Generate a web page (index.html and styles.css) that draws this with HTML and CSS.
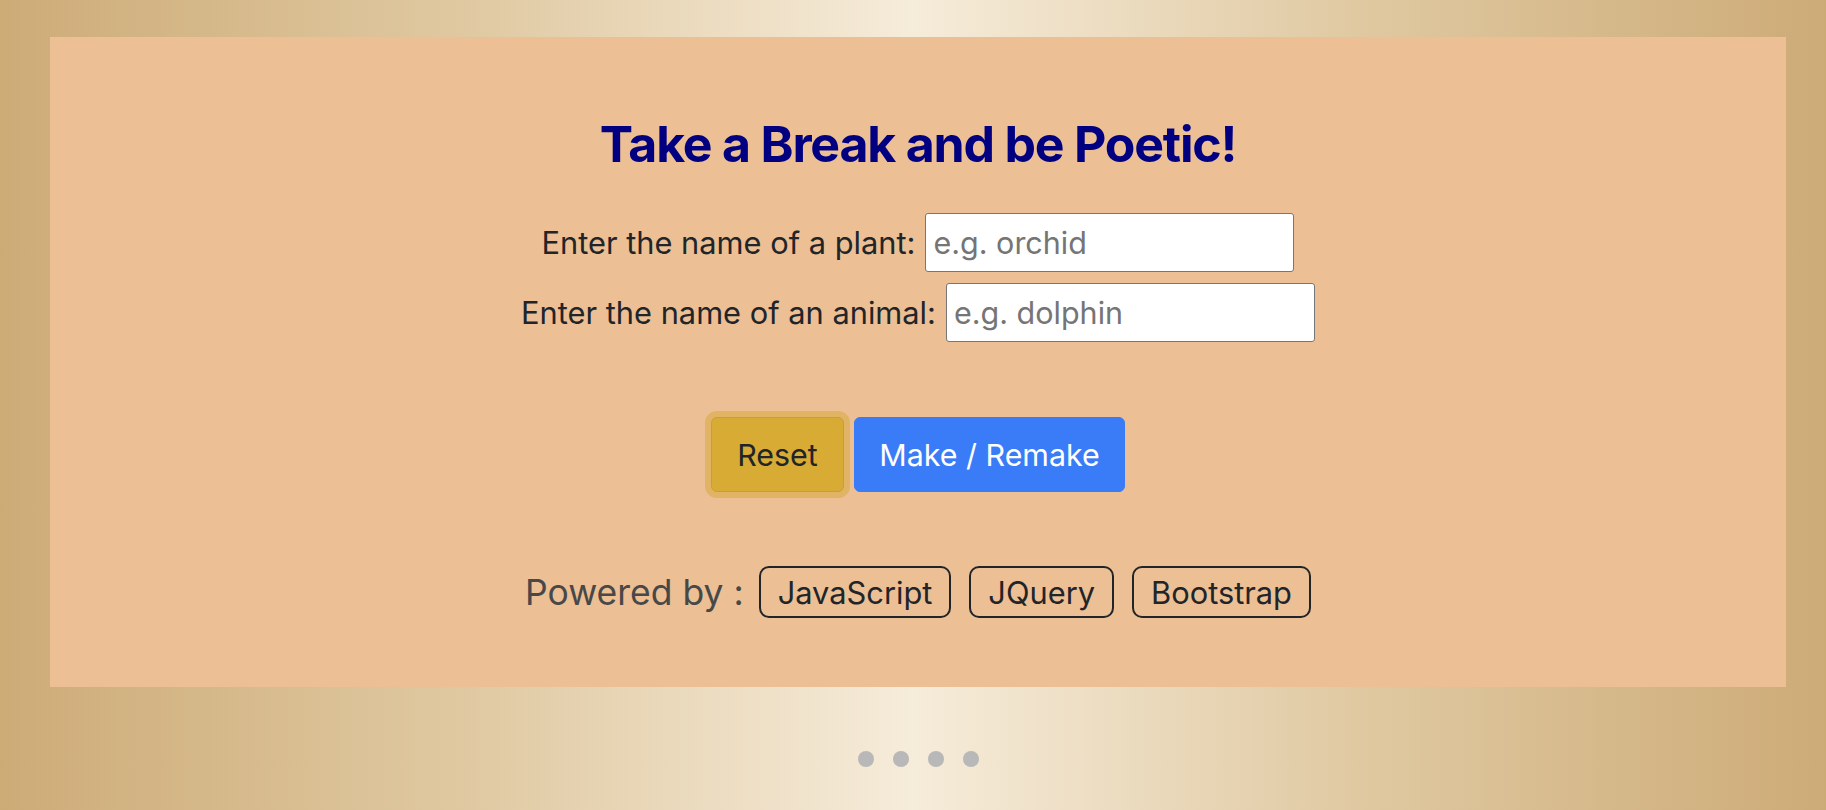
FILE: index.html
```html
<!DOCTYPE html>
<html lang="en">
<head>
<meta charset="utf-8">
<title>Take a Break and be Poetic!</title>
<link rel="stylesheet" href="styles.css">
</head>
<body>
<div class="stage">
  <section class="card">
    <h1 class="title">Take a Break and be Poetic!</h1>
    <form class="form">
      <div class="row">
        <label class="label" for="plant">Enter the name of a plant:</label>
        <input class="field" id="plant" type="text" placeholder="e.g. orchid">
      </div>
      <div class="row">
        <label class="label" for="animal">Enter the name of an animal:</label>
        <input class="field" id="animal" type="text" placeholder="e.g. dolphin">
      </div>
      <div class="actions">
        <button type="button" class="btn btn-reset">Reset</button>
        <button type="button" class="btn btn-make">Make / Remake</button>
      </div>
    </form>
    <div class="powered">
      <span class="powered-label">Powered by :</span>
      <span class="badge">JavaScript</span>
      <span class="badge">JQuery</span>
      <span class="badge">Bootstrap</span>
    </div>
  </section>
  <div class="dots">
    <span class="dot"></span>
    <span class="dot"></span>
    <span class="dot"></span>
    <span class="dot"></span>
  </div>
</div>
</body>
</html>
```
FILE: styles.css
```css
* { box-sizing: border-box; }
html, body { margin: 0; height: 100%; }
body {
  font-family: Inter, "Noto Sans", "Liberation Sans", sans-serif;
  background: linear-gradient(to right, #cdab77 0%, #dfc8a0 25%, #f6ecda 50%, #dfc8a0 75%, #cdab77 100%);
  overflow: hidden;
}
.stage {
  padding: 37px 40px 0 50px;
  display: flex;
  flex-direction: column;
}
.card {
  height: 650px;
  background: #ecbf94;
  display: flex;
  flex-direction: column;
  align-items: center;
  padding-top: 77px;
}
.title {
  margin: 0;
  font-size: 50px;
  line-height: 60px;
  font-weight: 700;
  color: #000080;
  letter-spacing: -1.2px;
}
.form {
  margin-top: 39px;
  display: flex;
  flex-direction: column;
  align-items: center;
}
.row {
  display: flex;
  align-items: center;
  gap: 10px;
  height: 59px;
  margin-bottom: 11px;
}
.label {
  font-size: 30.8px;
  color: #212529;
}
.field {
  width: 369px;
  height: 59px;
  border: 1px solid #767676;
  border-radius: 3px;
  background: #fff;
  padding: 0 7px;
  font-family: inherit;
  font-size: 30.5px;
  color: #212529;
}
.field::placeholder { color: #757575; }
.actions {
  margin-top: 64px;
  display: flex;
  gap: 10px;
  align-items: center;
}
.btn {
  height: 75px;
  border-radius: 6px;
  font-family: inherit;
  font-size: 30.4px;
  padding: 0;
  border: 1px solid transparent;
}
.btn-reset {
  background: #d8ab35;
  border-color: #c9a030;
  color: #212529;
  width: 133px;
  box-shadow: 0 0 0 6px rgba(214, 168, 51, 0.5);
}
.btn-make {
  background: #3a7bf7;
  border-color: #3a7bf7;
  color: #fff;
  width: 271px;
}
.powered {
  margin-top: 74px;
  display: flex;
  align-items: center;
  gap: 18px;
}
.powered-label {
  font-size: 35.5px;
  color: #484848;
  margin-right: -3px;
}
.badge {
  height: 52px;
  display: flex;
  align-items: center;
  padding: 0 17px;
  border: 2px solid #212529;
  border-radius: 10px;
  font-size: 30.8px;
  color: #212529;
}
.dots {
  margin-top: 64px;
  display: flex;
  justify-content: center;
  gap: 19px;
}
.dot {
  width: 16px;
  height: 16px;
  border-radius: 50%;
  background: #b8b8b8;
}
```
